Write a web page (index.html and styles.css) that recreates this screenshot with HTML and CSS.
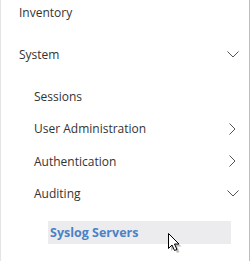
FILE: index.html
```html
<!DOCTYPE html>
<html lang="en">
<head>
    <meta charset="UTF-8">
    <title>Navigation</title>
    <link rel="stylesheet" href="styles.css">
</head>
<body>
    <nav class="side-nav">
        <div class="nav-item top first">Inventory</div>
        <div class="nav-item top open">
            <span>System</span>
            <svg class="chev" width="12" height="7" viewBox="0 0 12 7"><path d="M0.5 0.5 L6 6 L11.5 0.5" fill="none" stroke="#555" stroke-width="1"/></svg>
        </div>
        <div class="nav-item sub">Sessions</div>
        <div class="nav-item sub">
            <span>User Administration</span>
            <svg class="chev right" width="7" height="12" viewBox="0 0 7 12"><path d="M0.5 0.5 L6 6 L0.5 11.5" fill="none" stroke="#555" stroke-width="1"/></svg>
        </div>
        <div class="nav-item sub">
            <span>Authentication</span>
            <svg class="chev right" width="7" height="12" viewBox="0 0 7 12"><path d="M0.5 0.5 L6 6 L0.5 11.5" fill="none" stroke="#555" stroke-width="1"/></svg>
        </div>
        <div class="nav-item sub">
            <span>Auditing</span>
            <svg class="chev" width="12" height="7" viewBox="0 0 12 7"><path d="M0.5 0.5 L6 6 L11.5 0.5" fill="none" stroke="#555" stroke-width="1"/></svg>
        </div>
        <div class="nav-leaf">
            <div class="leaf-box">Syslog Servers</div>
            <svg class="cursor" width="16" height="22" viewBox="0 0 16 22">
                <path d="M2.5 2.5 L2.5 17.5 L6 14 L8.5 19.5 L11 18.5 L8.5 13 L13 13 Z" fill="#000" opacity="0.25" transform="translate(1.5,1.5)"/>
                <path d="M1.5 1.5 L1.5 16.5 L5 13 L7.5 18.5 L10 17.5 L7.5 12 L12 12 Z" fill="#fff" stroke="#000" stroke-width="1" stroke-linejoin="miter"/>
            </svg>
        </div>
    </nav>
</body>
</html>
```

FILE: styles.css
```css
* {
    box-sizing: border-box;
    margin: 0;
    padding: 0;
}

body {
    width: 251px;
    height: 261px;
    overflow: hidden;
    background: #ffffff;
    font-family: 'Open Sans', 'Liberation Sans', sans-serif;
    font-size: 12px;
    color: #333;
}

.side-nav {
    width: 250px;
    height: 261px;
    border-left: 1px solid #e4e4e4;
    border-right: 1px solid #bdbdbd;
}

.nav-item {
    display: flex;
    align-items: center;
    justify-content: space-between;
    height: 32.5px;
    padding-right: 10px;
}

.nav-item.top {
    padding-left: 18px;
}

.nav-item.first {
    height: 24px;
}

.nav-item.open {
    height: 56px;
    padding-top: 4px;
}

.nav-item.sub {
    padding-left: 33px;
}

.chev.right {
    margin-right: 3px;
}

.nav-leaf {
    position: relative;
    padding: 11px 18px 0 47px;
}

.leaf-box {
    height: 23px;
    line-height: 23px;
    padding-left: 2px;
    background: #ececee;
    color: #4a82c6;
    font-weight: 700;
    font-size: 12.5px;
}

.cursor {
    position: absolute;
    left: 166px;
    top: 22px;
}
```
